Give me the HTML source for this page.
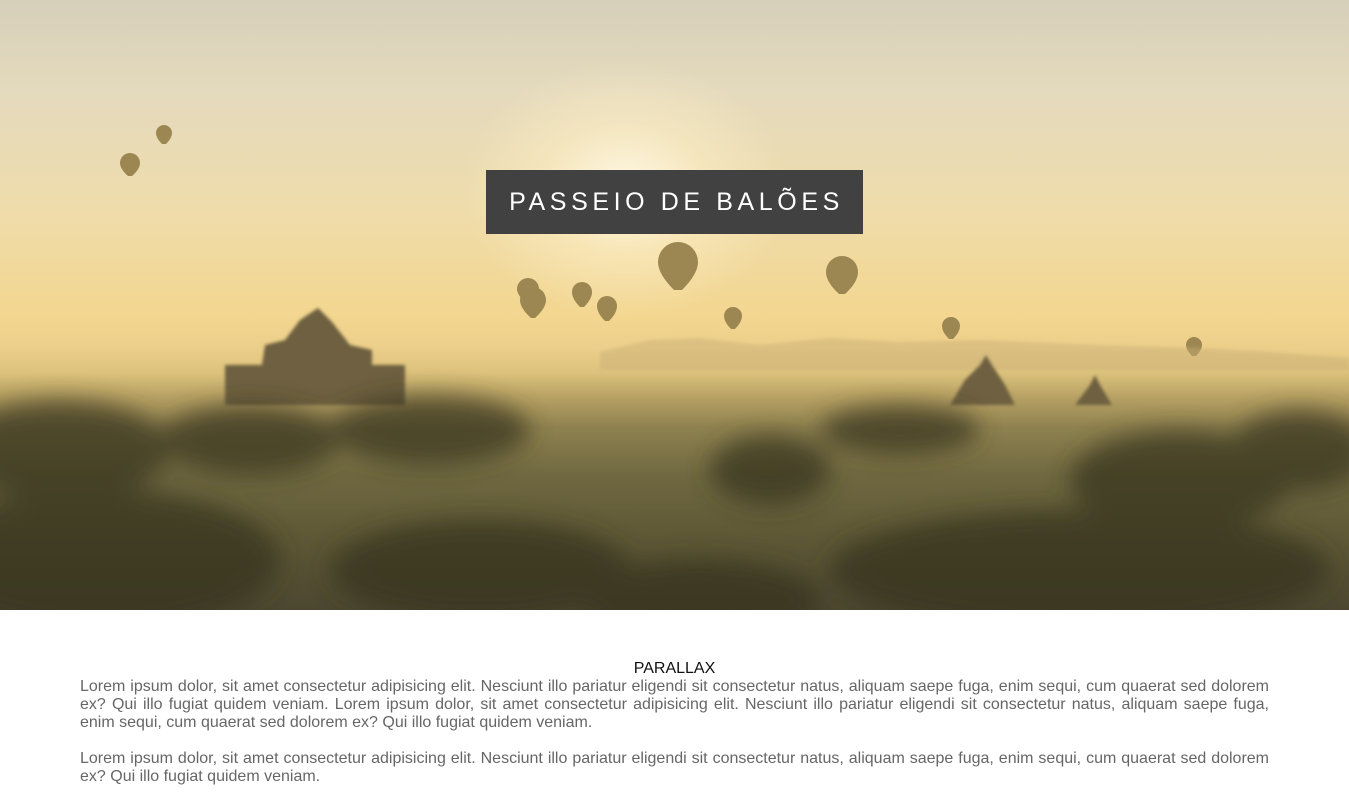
<!DOCTYPE html>
<html><head><style>
html,body{margin:0;padding:0;background:#fff;width:1349px;height:767px;overflow:hidden}
.hero{position:relative;width:1349px;height:610px;overflow:hidden;
background:linear-gradient(180deg,#d6cfba 0%,#e4dabd 15%,#efdcaa 35%,#f3d68f 52%,#eccf8a 57%,#dcc27c 61%,#b8a264 65%,#8f8250 70%,#6f6840 78%,#5e5836 88%,#4c4730 100%)}
.sun{position:absolute;left:460px;top:60px;width:330px;height:260px;border-radius:50%;background:radial-gradient(ellipse at center,rgba(255,250,230,.95) 0%,rgba(255,240,200,.5) 35%,rgba(255,230,170,0) 70%)}
.title{position:absolute;left:486px;top:170px;width:377px;height:64px;background:#414141;color:#fff;font:25px "Liberation Sans",sans-serif;letter-spacing:4.6px;text-align:center;line-height:64px;text-indent:4px}
.content{position:absolute;top:660px;left:80px;width:1189px;font:16px/18px "Liberation Sans",sans-serif;color:#666;text-align:justify}
.content h3{margin:0;font-weight:normal;color:#111;text-align:center;font-size:16px;line-height:18px}
.content p{margin:0 0 18px}
</style></head><body>
<div class="hero">
<div class="sun"></div>
<svg width="1349" height="610" style="position:absolute;left:0;top:0">
<defs><filter id="b"><feGaussianBlur stdDeviation="12"/></filter><filter id="s"><feGaussianBlur stdDeviation="1.5"/></filter></defs>
<g fill="#9c8752">
<path d="M120 163a10 10 0 1 1 20 0q0 6 -8 13h-4q-8-7-8-13z"/>
<path d="M156 133a8 8 0 1 1 16 0q0 5-6 11h-4q-6-6-6-11z"/>
<path d="M658 262a20 20 0 1 1 40 0q0 12-16 28h-8q-16-16-16-28z"/>
<path d="M826 272a16 16 0 1 1 32 0q0 10-13 22h-6q-13-12-13-22z"/>
<path d="M517 289a11 11 0 1 1 22 0q0 6-9 14h-4q-9-8-9-14z"/>
<path d="M520 300a13 13 0 1 1 26 0q0 8-11 18h-4q-11-10-11-18z"/>
<path d="M572 292a10 10 0 1 1 20 0q0 7-8 15h-4q-8-8-8-15z"/>
<path d="M597 306a10 10 0 1 1 20 0q0 7-8 15h-4q-8-8-8-15z"/>
<path d="M724 316a9 9 0 1 1 18 0q0 6-7 13h-4q-7-7-7-13z"/>
<path d="M942 326a9 9 0 1 1 18 0q0 6-7 13h-4q-7-7-7-13z"/>
<path d="M1186 345a8 8 0 1 1 16 0q0 5-6 11h-4q-6-6-6-11z"/>
</g>
<path d="M600 352 L650 340 L700 338 L760 345 L830 338 L900 342 L980 340 L1100 345 L1200 348 L1270 352 L1349 358 L1349 370 L600 370Z" fill="#c9ae78" opacity=".45" filter="url(#s)"/>
<g fill="#6e6140" filter="url(#s)">
<path d="M225 405 L225 365 L262 365 L265 345 L285 340 L300 320 L318 308 L332 322 L350 345 L372 350 L372 365 L405 365 L405 405Z"/>
<path d="M950 405 L965 380 L980 365 L986 355 L992 365 L1005 385 L1015 405Z"/>
<path d="M1075 405 L1090 385 L1095 375 L1100 385 L1112 405Z"/>
</g>
<g fill="#34331f" opacity=".7" filter="url(#b)">
<ellipse cx="60" cy="450" rx="110" ry="50"/><ellipse cx="250" cy="440" rx="90" ry="35"/>
<ellipse cx="430" cy="430" rx="100" ry="35"/><ellipse cx="770" cy="470" rx="60" ry="35"/>
<ellipse cx="1180" cy="480" rx="110" ry="50"/><ellipse cx="1300" cy="450" rx="70" ry="40"/>
<ellipse cx="100" cy="560" rx="180" ry="70"/><ellipse cx="480" cy="570" rx="150" ry="50"/>
<ellipse cx="1080" cy="570" rx="250" ry="60"/><ellipse cx="700" cy="600" rx="120" ry="40"/>
<ellipse cx="900" cy="430" rx="80" ry="25"/>
</g>
</svg>
<div class="title">PASSEIO DE BALÕES</div>
</div>
<div class="content">
<h3>PARALLAX</h3>
<p>Lorem ipsum dolor, sit amet consectetur adipisicing elit. Nesciunt illo pariatur eligendi sit consectetur natus, aliquam saepe fuga, enim sequi, cum quaerat sed dolorem ex? Qui illo fugiat quidem veniam. Lorem ipsum dolor, sit amet consectetur adipisicing elit. Nesciunt illo pariatur eligendi sit consectetur natus, aliquam saepe fuga, enim sequi, cum quaerat sed dolorem ex? Qui illo fugiat quidem veniam.</p>
<p>Lorem ipsum dolor, sit amet consectetur adipisicing elit. Nesciunt illo pariatur eligendi sit consectetur natus, aliquam saepe fuga, enim sequi, cum quaerat sed dolorem ex? Qui illo fugiat quidem veniam.</p>
</div>
</body></html>
